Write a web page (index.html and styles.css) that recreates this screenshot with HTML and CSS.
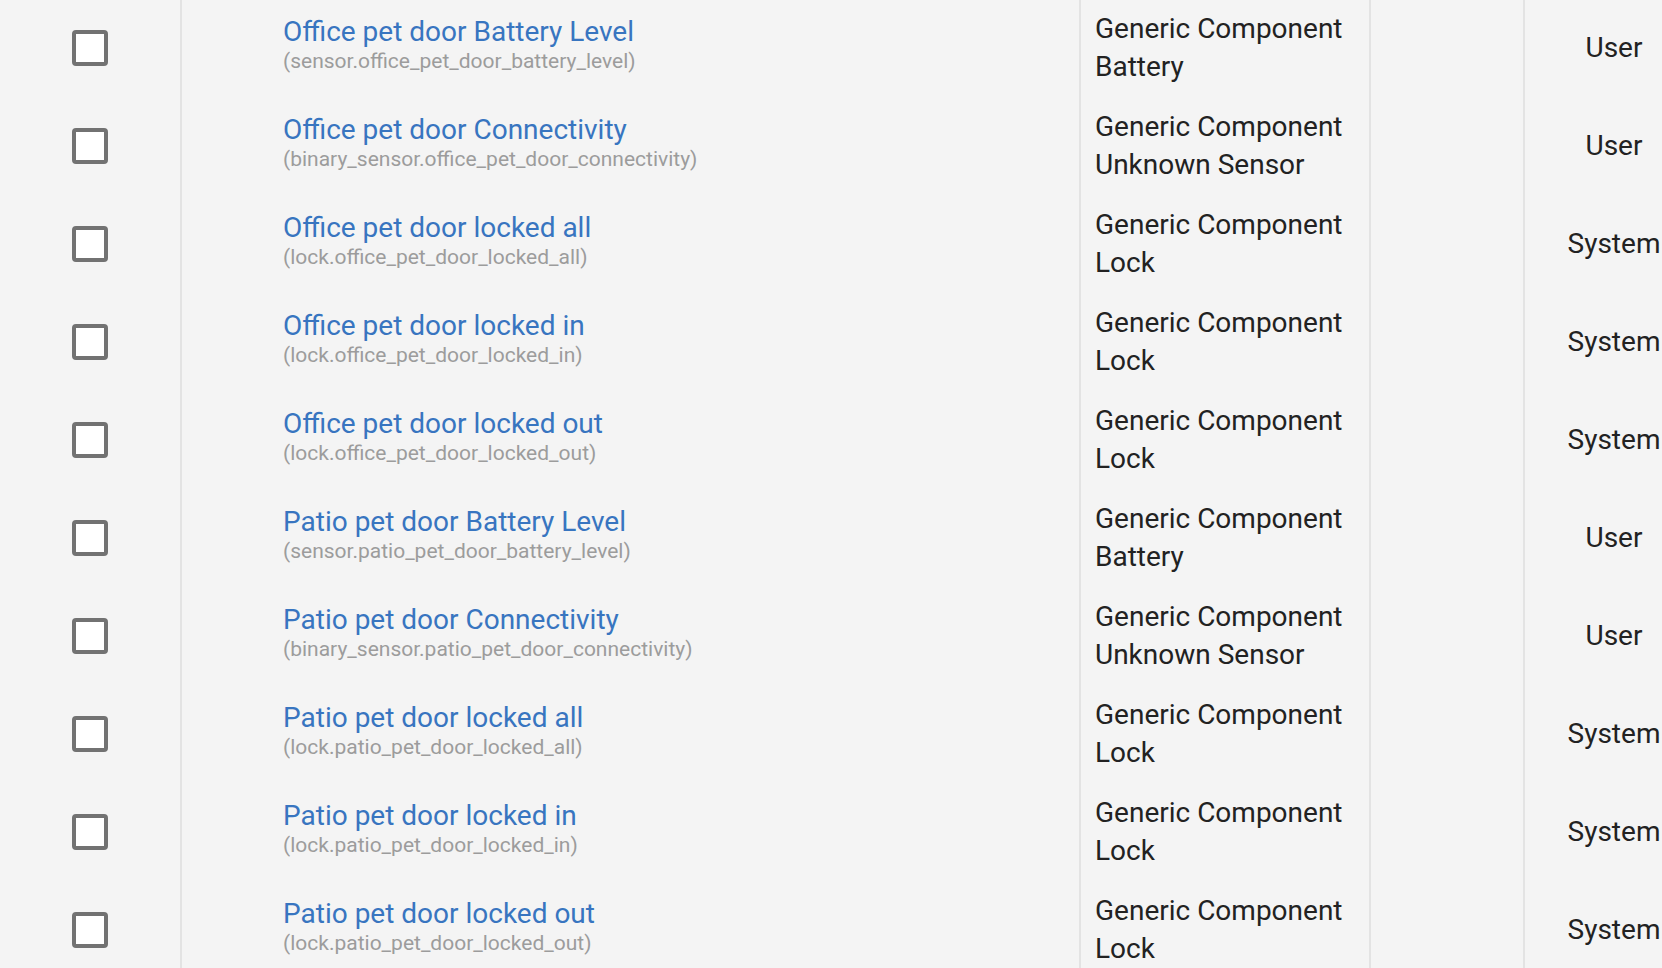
FILE: index.html
```html
<!DOCTYPE html>
<html>
<head>
<meta charset="utf-8">
<link rel="stylesheet" href="styles.css">
</head>
<body>
<div class="table">
  <div class="row">
    <div class="cell sel"><span class="cb"></span></div>
    <div class="cell name"><span class="primary">Office pet door Battery Level</span><span class="secondary">(sensor.office_pet_door_battery_level)</span></div>
    <div class="cell integ">Generic Component Battery</div>
    <div class="cell area"></div>
    <div class="cell status">User</div>
  </div>
  <div class="row">
    <div class="cell sel"><span class="cb"></span></div>
    <div class="cell name"><span class="primary">Office pet door Connectivity</span><span class="secondary">(binary_sensor.office_pet_door_connectivity)</span></div>
    <div class="cell integ">Generic Component Unknown Sensor</div>
    <div class="cell area"></div>
    <div class="cell status">User</div>
  </div>
  <div class="row">
    <div class="cell sel"><span class="cb"></span></div>
    <div class="cell name"><span class="primary">Office pet door locked all</span><span class="secondary">(lock.office_pet_door_locked_all)</span></div>
    <div class="cell integ">Generic Component Lock</div>
    <div class="cell area"></div>
    <div class="cell status">System</div>
  </div>
  <div class="row">
    <div class="cell sel"><span class="cb"></span></div>
    <div class="cell name"><span class="primary">Office pet door locked in</span><span class="secondary">(lock.office_pet_door_locked_in)</span></div>
    <div class="cell integ">Generic Component Lock</div>
    <div class="cell area"></div>
    <div class="cell status">System</div>
  </div>
  <div class="row">
    <div class="cell sel"><span class="cb"></span></div>
    <div class="cell name"><span class="primary">Office pet door locked out</span><span class="secondary">(lock.office_pet_door_locked_out)</span></div>
    <div class="cell integ">Generic Component Lock</div>
    <div class="cell area"></div>
    <div class="cell status">System</div>
  </div>
  <div class="row">
    <div class="cell sel"><span class="cb"></span></div>
    <div class="cell name"><span class="primary">Patio pet door Battery Level</span><span class="secondary">(sensor.patio_pet_door_battery_level)</span></div>
    <div class="cell integ">Generic Component Battery</div>
    <div class="cell area"></div>
    <div class="cell status">User</div>
  </div>
  <div class="row">
    <div class="cell sel"><span class="cb"></span></div>
    <div class="cell name"><span class="primary">Patio pet door Connectivity</span><span class="secondary">(binary_sensor.patio_pet_door_connectivity)</span></div>
    <div class="cell integ">Generic Component Unknown Sensor</div>
    <div class="cell area"></div>
    <div class="cell status">User</div>
  </div>
  <div class="row">
    <div class="cell sel"><span class="cb"></span></div>
    <div class="cell name"><span class="primary">Patio pet door locked all</span><span class="secondary">(lock.patio_pet_door_locked_all)</span></div>
    <div class="cell integ">Generic Component Lock</div>
    <div class="cell area"></div>
    <div class="cell status">System</div>
  </div>
  <div class="row">
    <div class="cell sel"><span class="cb"></span></div>
    <div class="cell name"><span class="primary">Patio pet door locked in</span><span class="secondary">(lock.patio_pet_door_locked_in)</span></div>
    <div class="cell integ">Generic Component Lock</div>
    <div class="cell area"></div>
    <div class="cell status">System</div>
  </div>
  <div class="row">
    <div class="cell sel"><span class="cb"></span></div>
    <div class="cell name"><span class="primary">Patio pet door locked out</span><span class="secondary">(lock.patio_pet_door_locked_out)</span></div>
    <div class="cell integ">Generic Component Lock</div>
    <div class="cell area"></div>
    <div class="cell status">System</div>
  </div>
</div>
</body>
</html>
```
FILE: styles.css
```css
html, body {
  margin: 0;
  padding: 0;
  background: #f4f4f4;
  overflow: hidden;
}
body {
  font-family: Roboto, "Noto Sans", sans-serif;
  color: #222222;
}
.table {
  width: 1702px;
  margin-top: -1.5px;
}
.row {
  display: grid;
  grid-template-columns: 180px 899px 290px 154px 180px;
  height: 98px;
}
.cell {
  box-sizing: border-box;
  display: flex;
  align-items: center;
  border-left: 2px solid #e3e3e3;
}
.sel {
  border-left: none;
  justify-content: center;
}
.cb {
  box-sizing: border-box;
  width: 36px;
  height: 36px;
  border: 4px solid #727272;
  border-radius: 4px;
  background: #ffffff;
}
.name {
  flex-direction: column;
  align-items: flex-start;
  justify-content: center;
  padding-left: 101px;
  padding-bottom: 6px;
}
.primary {
  font-size: 28px;
  line-height: 33px;
  color: #3875c0;
  white-space: nowrap;
}
.secondary {
  font-size: 21px;
  line-height: 26px;
  color: #9c9c9c;
  white-space: nowrap;
}
.integ {
  padding: 0 14px;
  font-size: 28px;
  line-height: 37.5px;
}
.status {
  justify-content: center;
  font-size: 28px;
}
```
